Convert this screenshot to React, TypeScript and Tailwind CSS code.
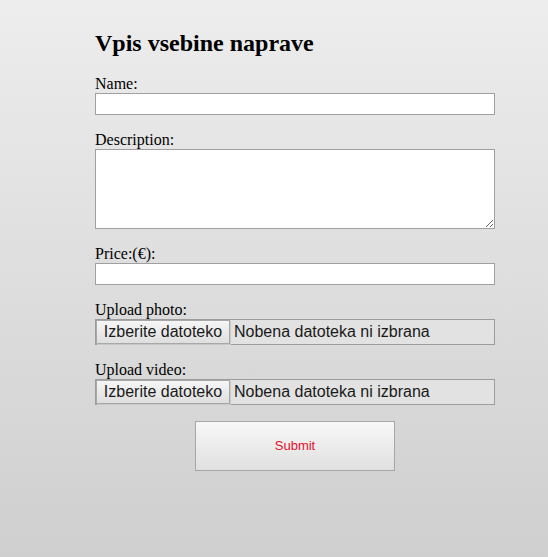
export default function App() {
  const labelCls = "block text-[16px] leading-[18px] text-black";
  const inputCls =
    "block w-[400px] h-[22px] bg-white border border-[#a0a0a0] px-1 text-[14px] outline-none";

  const FileField = ({ label }: { label: string }) => (
    <div>
      <span className={labelCls}>{label}</span>
      <div
        className="flex items-center w-[400px] h-[26px] bg-[#e2e2e2] border border-[#9c9c9c] text-[16px] text-[#1a1a1a]"
        style={{ fontFamily: '"Liberation Sans", Arial, sans-serif' }}
      >
        <button
          type="button"
          className="h-[24px] w-[134px] border border-[#a8a8a8] bg-gradient-to-b from-[#f6f6f6] to-[#dedede] text-[16px] leading-none text-[#1a1a1a] shadow-[1px_1px_0_#c8c8c8]"
        >
          Izberite datoteko
        </button>
        <span className="ml-[4px]">Nobena datoteka ni izbrana</span>
      </div>
    </div>
  );

  return (
    <div
      className="min-h-screen bg-gradient-to-b from-[#ededed] to-[#cfcfcf]"
      style={{ fontFamily: '"Liberation Serif", "Times New Roman", serif' }}
    >
      <form className="ml-[95px] pt-[29px] w-[400px] flex flex-col gap-[16px]">
        <h2 className="text-[24px] leading-[28px] font-bold text-black mb-[2px]">
          Vpis vsebine naprave
        </h2>

        <div>
          <label className={labelCls}>Name:</label>
          <input type="text" className={inputCls} />
        </div>

        <div>
          <label className={labelCls}>Description:</label>
          <textarea className="block w-[400px] h-[80px] bg-white border border-[#a0a0a0] outline-none" />
        </div>

        <div>
          <label className={labelCls}>Price:(€):</label>
          <input type="text" className={inputCls} />
        </div>

        <FileField label="Upload photo:" />
        <FileField label="Upload video:" />

        <div className="flex justify-center">
          <button
            type="button"
            className="w-[200px] h-[50px] border border-[#a6a6a6] bg-gradient-to-b from-[#f8f8f8] to-[#e0e0e0] text-[13px] text-[#e4112b]"
            style={{ fontFamily: '"Liberation Sans", Arial, sans-serif' }}
          >
            Submit
          </button>
        </div>
      </form>
    </div>
  );
}
